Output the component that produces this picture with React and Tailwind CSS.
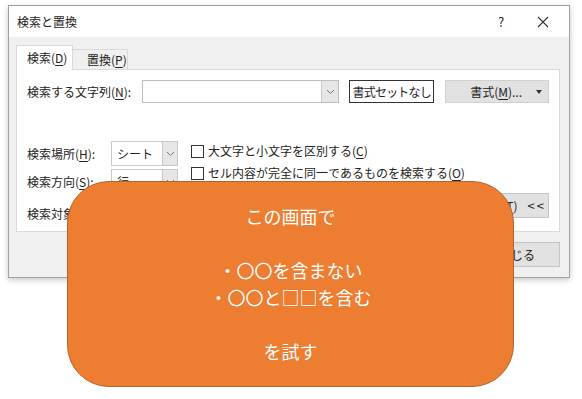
import React from 'react';

// 検索と置換ダイアログ + 説明の吹き出し

const font = { fontFamily: '"Noto Sans CJK JP", "Noto Sans", sans-serif' };

const U = ({ children }) => <span className="underline underline-offset-2">{children}</span>;

const Arrow = () => (
    <svg width="9" height="6" viewBox="0 0 9 6" className="text-[#777]">
        <path d="M1 1 L4.5 4.5 L8 1" fill="none" stroke="currentColor" strokeWidth="1" />
    </svg>
);

const Select = ({ value }) => (
    <div className="w-[67px] h-[25px] bg-white border border-[#c8c8c8] flex">
        <div className="flex-1 flex items-center pl-[5px] text-[12px] text-[#222]">{value}</div>
        <div className="w-[15px] bg-[#e6e6e6] border-l border-[#c8c8c8] flex items-center justify-center">
            <Arrow />
        </div>
    </div>
);

const Check = ({ children }) => (
    <div className="flex items-center gap-[4px] text-[12px] text-[#222] h-[18px] whitespace-nowrap">
        <div className="w-[13px] h-[13px] border border-[#333] bg-white"></div>
        <span>{children}</span>
    </div>
);

const Btn = ({ children, className = '' }) => (
    <div className={`h-[25px] bg-[#e1e1e1] border border-[#c4c4c4] flex items-center whitespace-nowrap text-[12px] text-[#222] ${className}`}>
        {children}
    </div>
);

export default function App() {
    return (
        <div className="w-[582px] h-[399px] bg-white relative overflow-hidden" style={font}>
            {/* ダイアログ */}
            <div className="ml-[8px] mt-[5px] w-[562px] h-[273px] bg-[#f0f0f0] border border-[#a0a0a0] shadow-[0_2px_6px_rgba(0,0,0,0.22)] flex flex-col">
                {/* タイトルバー */}
                <div className="h-[31px] bg-white flex items-center pl-[8px] text-[12px] text-[#222]">
                    <span className="flex-1">検索と置換</span>
                    <span className="w-[20px] text-center mr-[26px] text-[13px]">?</span>
                    <svg width="12" height="12" viewBox="0 0 12 12" className="mr-[20px]">
                        <path d="M1 1 L11 11 M11 1 L1 11" stroke="#333" strokeWidth="1.1" />
                    </svg>
                </div>

                <div className="pl-[7px] pr-[9px] pt-[8px] flex flex-col">
                    {/* タブ */}
                    <div className="flex items-end h-[24px]">
                        <div className="w-[57px] h-[25px] -mb-[1px] bg-white border border-[#d9d9d9] border-b-0 flex items-center pl-[10px] text-[12px] text-[#222] relative z-10">
                            検索(<U>D</U>)
                        </div>
                        <div className="w-[55px] h-[20px] bg-[#f0f0f0] border border-[#d9d9d9] border-b-0 border-l-0 flex items-center pl-[14px] text-[12px] text-[#222]">
                            置換(<U>P</U>)
                        </div>
                    </div>

                    {/* パネル */}
                    <div className="h-[163px] bg-white border border-[#d9d9d9] pl-[10px] pr-[10px] pt-[10px] flex flex-col">
                        <div className="flex items-center h-[23px] text-[12px] text-[#222] whitespace-nowrap">
                            <span className="w-[115px]">検索する文字列(<U>N</U>):</span>
                            <div className="w-[198px] h-[23px] border border-[#bdbdbd] flex">
                                <div className="flex-1"></div>
                                <div className="w-[17px] bg-[#e6e6e6] border-l border-[#c8c8c8] flex items-center justify-center">
                                    <Arrow />
                                </div>
                            </div>
                            <div className="ml-[10px] w-[85px] h-[23px] border border-[#333] flex items-center justify-center tracking-[-0.8px]">
                                書式セットなし
                            </div>
                            <div className="ml-[11px] w-[104px] h-[23px] bg-[#e1e1e1] border border-[#d0d0d0] flex items-center pl-[24px] pr-[6px]">
                                <span className="flex-1">書式(<U>M</U>)...</span>
                                <svg width="6" height="4" viewBox="0 0 6 4">
                                    <path d="M0 0 H6 L3 4 Z" fill="#333" />
                                </svg>
                            </div>
                        </div>

                        <div className="mt-[38px] flex">
                            <div className="flex flex-col gap-[3px] text-[12px] text-[#222] whitespace-nowrap">
                                <div className="flex items-center h-[25px]">
                                    <span className="w-[84px]">検索場所(<U>H</U>):</span>
                                    <Select value="シート" />
                                </div>
                                <div className="flex items-center h-[25px]">
                                    <span className="w-[84px]">検索方向(<U>S</U>):</span>
                                    <Select value="行" />
                                </div>
                                <div className="flex items-center h-[25px] mt-[4px]">
                                    <span className="w-[84px]">検索対象(<U>L</U>):</span>
                                    <Select value="数式" />
                                </div>
                            </div>
                            <div className="ml-[13px] flex flex-col gap-[4px] pt-[1px] flex-1">
                                <Check>大文字と小文字を区別する(<U>C</U>)</Check>
                                <Check>セル内容が完全に同一であるものを検索する(<U>O</U>)</Check>
                                <div className="flex justify-end mt-[7px]">
                                    <Btn className="w-[100px] justify-end pr-[2px]">
                                        オプション(<U>T</U>)<span className="ml-[10px] tracking-[2px] text-[13px]">&lt;&lt;</span>
                                    </Btn>
                                </div>
                            </div>
                        </div>
                    </div>

                    {/* 下部ボタン */}
                    <div className="flex justify-end mt-[10px]">
                        <Btn className="w-[86px] justify-center">閉じる</Btn>
                    </div>
                </div>
            </div>

            {/* 吹き出し */}
            <div className="absolute left-[67px] top-[181px] w-[447px] h-[206px] rounded-[42px] bg-[#ED7D31] border border-[#b5622a] flex flex-col items-center justify-center text-[18px] leading-[27px] text-white">
                <p>この画面で</p>
                <p className="h-[27px]"></p>
                <p>・〇〇を含まない</p>
                <p>・〇〇と□□を含む</p>
                <p className="h-[27px]"></p>
                <p>を試す</p>
            </div>
        </div>
    );
}
